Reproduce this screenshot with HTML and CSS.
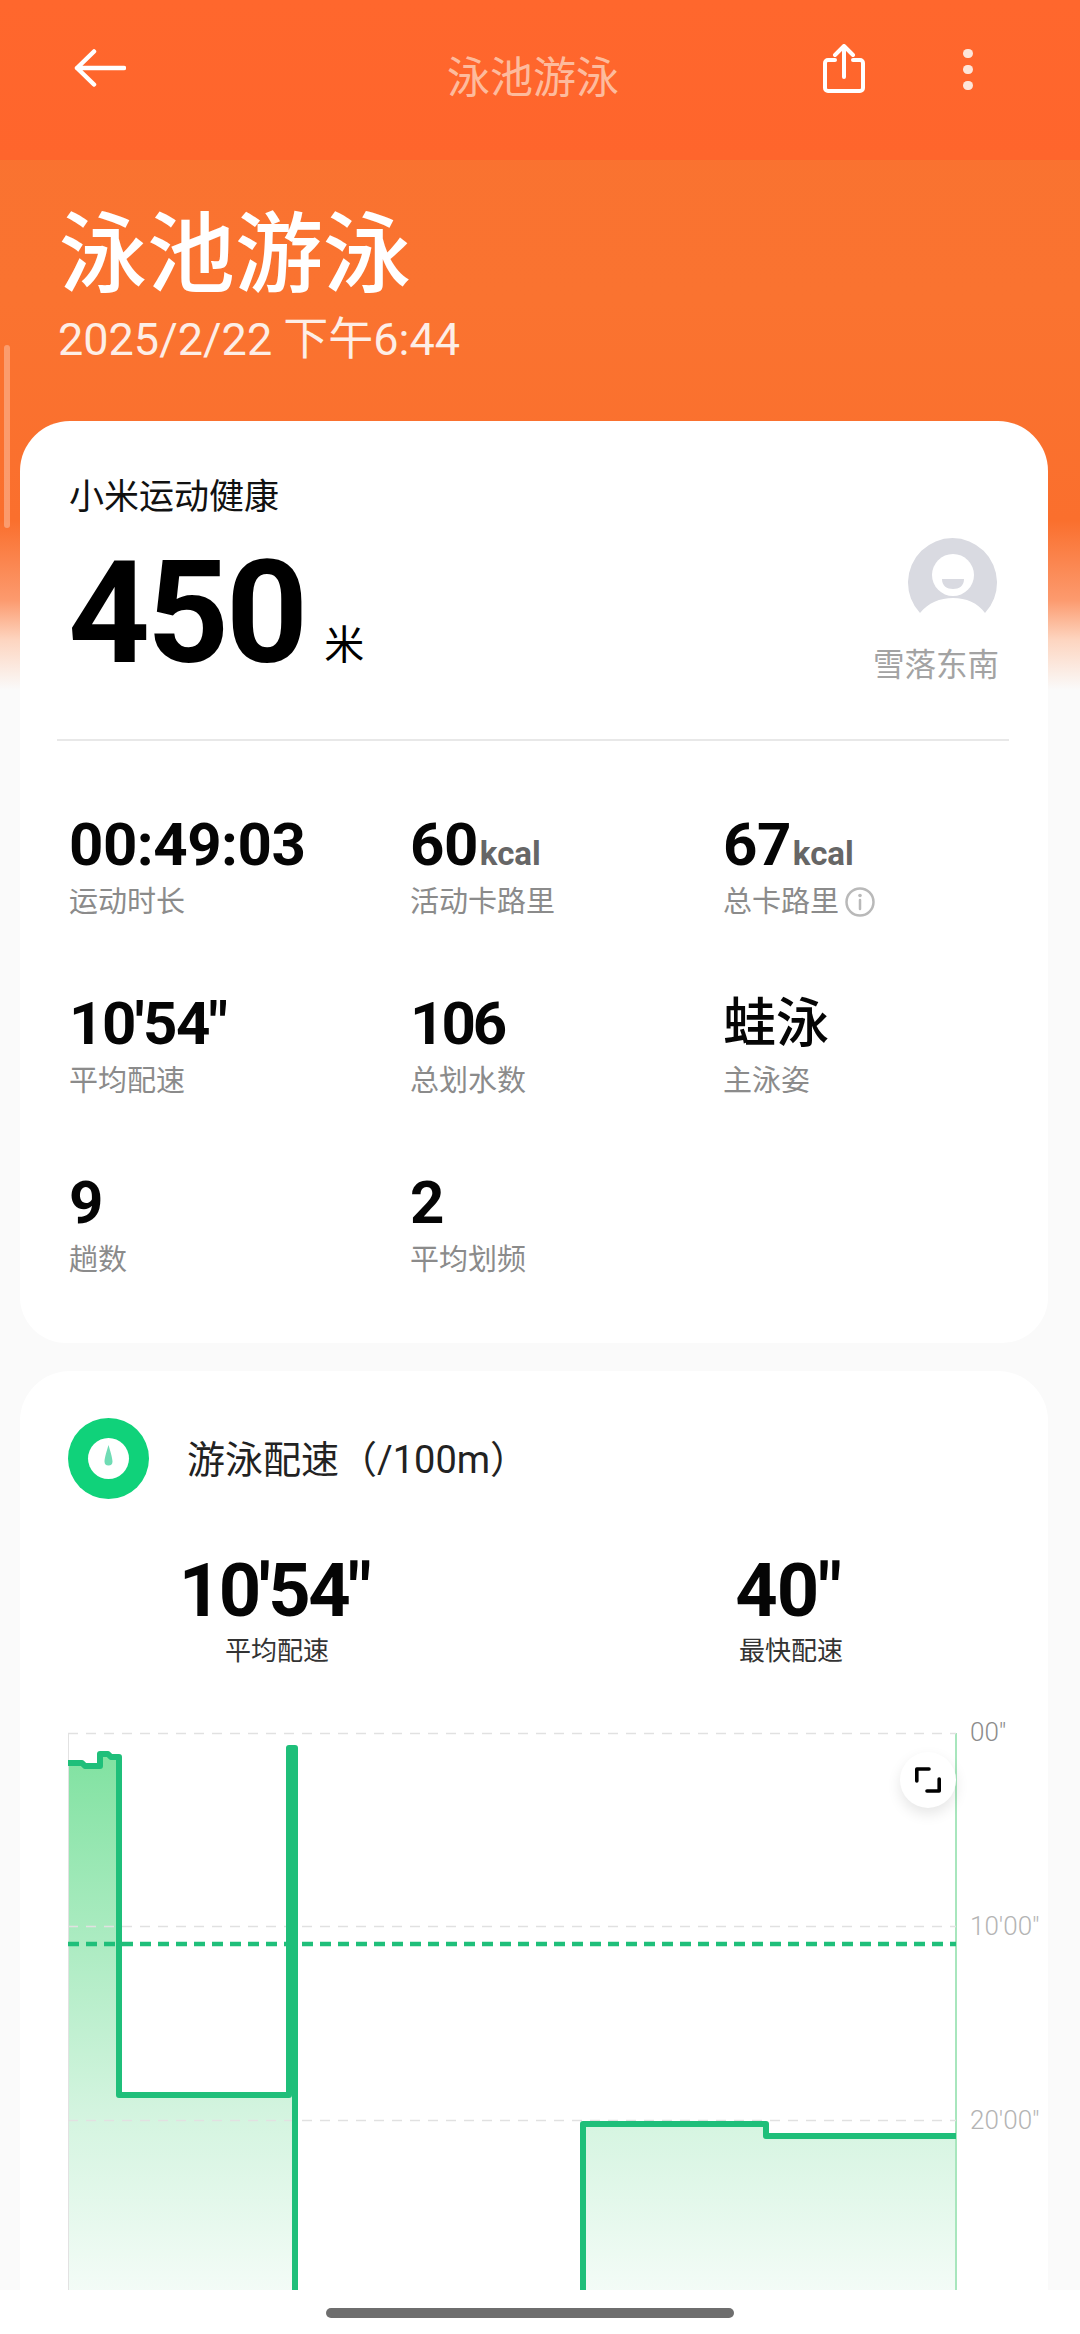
FILE: index.html
```html
<!DOCTYPE html>
<html lang="zh-CN">
<head>
	<meta charset="UTF-8">
	<title>泳池游泳</title>
	<link rel="stylesheet" href="styles.css">
</head>
<body>
	<div class="page">
		<div class="scroll-hint"></div>

		<div class="topbar">
			<svg class="back" viewBox="0 0 52 38">
				<path d="M50 19H3M20 2.500L3 19l17 16.500"/>
			</svg>
			<div class="topbar-title">泳池游泳</div>
			<svg class="share" viewBox="0 0 42 49">
				<path d="M12 16H5a3 3 0 0 0-3 3v25a3 3 0 0 0 3 3h32a3 3 0 0 0 3-3V19a3 3 0 0 0-3-3h-7"/>
				<path d="M21 33V3M12 11l9-9 9 9"/>
			</svg>
			<div class="dots"><i></i><i></i><i></i></div>
		</div>

		<div class="hero">
			<div class="hero-title">泳池游泳</div>
			<div class="hero-date">2025/2/22 下午6:44</div>
		</div>

		<div class="card summary">
			<div class="summary-head">
				<div>
					<div class="source">小米运动健康</div>
					<div class="distance"><b>450</b><span>米</span></div>
				</div>
				<div class="user">
					<svg class="avatar" viewBox="0 0 90 78">
						<path class="avatar-bg" d="M12 76A44.500 44.500 0 1 1 77 76C70 66 58 61 45 61S20 66 12 76Z"/>
						<circle class="avatar-face" cx="45" cy="38" r="21"/>
						<path class="avatar-bg" d="M34 42H56C56 49 51 52 45 52S34 49 34 42Z"/>
					</svg>
					<div class="user-name">雪落东南</div>
				</div>
			</div>
			<div class="stats">
				<div class="stat">
					<div class="stat-value">00:49:03</div>
					<div class="stat-label">运动时长</div>
				</div>
				<div class="stat">
					<div class="stat-value">60<small>kcal</small></div>
					<div class="stat-label">活动卡路里</div>
				</div>
				<div class="stat">
					<div class="stat-value">67<small>kcal</small></div>
					<div class="stat-label">总卡路里
						<svg class="info" viewBox="0 0 30 30">
							<circle cx="15" cy="15" r="13.500"/>
							<path d="M15 13v9"/>
							<circle class="info-dot" cx="15" cy="8.500" r="1.800"/>
						</svg>
					</div>
				</div>
				<div class="stat">
					<div class="stat-value tight">10'54"</div>
					<div class="stat-label">平均配速</div>
				</div>
				<div class="stat">
					<div class="stat-value tighter">106</div>
					<div class="stat-label">总划水数</div>
				</div>
				<div class="stat">
					<div class="stat-value cjk">蛙泳</div>
					<div class="stat-label">主泳姿</div>
				</div>
				<div class="stat">
					<div class="stat-value">9</div>
					<div class="stat-label">趟数</div>
				</div>
				<div class="stat">
					<div class="stat-value">2</div>
					<div class="stat-label">平均划频</div>
				</div>
			</div>
		</div>

		<div class="card pace">
			<div class="pace-head">
				<svg class="pace-icon" viewBox="0 0 81 81">
					<circle class="pace-ring" cx="40.500" cy="40.500" r="40.500"/>
					<circle class="pace-inner" cx="40.500" cy="40.500" r="20.500"/>
					<path class="pace-drop" d="M40.500 27C42 32 44.500 40 44.500 43.500a4 4 0 0 1-8 0C36.500 40 39 32 40.500 27Z"/>
				</svg>
				<div class="pace-title">游泳配速（/100m）</div>
			</div>
			<div class="pace-nums">
				<div class="pace-num">
					<b class="tight">10'54"</b>
					<span>平均配速</span>
				</div>
				<div class="pace-num">
					<b>40"</b>
					<span>最快配速</span>
				</div>
			</div>
			<div class="chart">
				<!-- viewBox uses page coordinates, easier to compare against the screenshot -->
				<svg class="chart-svg" viewBox="20 1700 1028 590">
					<defs>
						<linearGradient id="fade" gradientUnits="userSpaceOnUse" x1="0" y1="1760" x2="0" y2="2300">
							<stop offset="0" stop-color="#82e2a2"/>
							<stop offset="0.65" stop-color="#d3f4df"/>
							<stop offset="1" stop-color="#f5fcf8"/>
						</linearGradient>
					</defs>
					<path class="area" d="M68 1763H82L85 1766H100V1754H108L111 1757H119V2095H292V2290H68Z"/>
					<path class="area" d="M583 2124H766V2136H956V2290H583Z"/>
					<path class="axis-left" d="M68.500 1733V2290"/>
					<path class="axis-right" d="M956 1733V2290"/>
					<path class="grid" d="M68 1733.500H956M68 1926.500H956M68 2120.500H956"/>
					<path class="avg" d="M68 1944H956"/>
					<path class="line" d="M68 1763H82L85 1766H100V1754H108L111 1757H119V2095H289V1748H295V2290"/>
					<path class="line" d="M583 2290V2124H766V2136H956"/>
					<text class="tick tick-first" x="970" y="1741">00"</text>
					<text class="tick" x="970" y="1935">10'00"</text>
					<text class="tick" x="970" y="2129">20'00"</text>
				</svg>
				<div class="expand">
					<svg viewBox="0 0 26 26">
						<path d="M1.800 14V2H14M24.200 12V24H12"/>
					</svg>
				</div>
			</div>
		</div>

		<div class="navbar"><div class="handle"></div></div>
	</div>
</body>
</html>
```

FILE: styles.css
```css
*{
	box-sizing: border-box;
}
html,body{
	margin: 0;
	padding: 0;
}
body{
	font-family: Roboto, "Noto Sans CJK SC", sans-serif;
}
.page{
	position: relative;
	display: flex;flex-direction: column;
	width: 1080px;height: 2334px;overflow: hidden;
	background: linear-gradient(180deg, #f97230 0, #fa7330 300px, #fa6f2d 520px, #fc9a6e 600px, #fdd5c0 640px, #fafafa 690px);
}
.scroll-hint{
	position: absolute;top: 345px;left: 4px;width: 6px;height: 183px;
	border-radius: 3px;background: rgba(255,255,255,.3);
}

.topbar{
	display: flex;align-items: center;flex: none;
	position: relative;
	height: 160px;padding: 0 0 24px 74px;
	background: linear-gradient(180deg, #ff672d, #ff652c);
}
.back{
	width: 52px;height: 38px;
	fill: none;stroke: #fff;stroke-width: 4.500;stroke-linecap: round;stroke-linejoin: round;
}
.topbar-title{
	position: absolute;top: 48px;left: 0;right: 0;padding-right: 14px;
	font-size: 43px;line-height: 60px;text-align: center;color: #fdbb9d;
}
.share{
	width: 42px;height: 49px;margin-left: 697px;
	fill: none;stroke: #fff;stroke-width: 4px;stroke-linecap: round;stroke-linejoin: round;
}
.dots{
	display: flex;flex-direction: column;gap: 6.500px;margin-left: 98px;margin-top: 3px;
}
.dots i{
	width: 9.500px;height: 9.500px;border-radius: 50%;background: #fde6da;
}

.hero{
	flex: none;
	height: 261px;padding: 40px 0 0 58px;color: #fff;
}
.hero-title{
	font-size: 88px;line-height: 110px;font-weight: 500;margin-left: 1px;
}
.hero-date{
	font-size: 45px;line-height: 56px;margin-top: 2px;color: #fdeee6;
}

.card{
	flex: none;
	margin: 0 32px 0 20px;background: #fff;
	border-radius: 50px 50px 46px 46px;
}
.summary{
	height: 922px;padding: 0 39px 0 37px;
}
.summary-head{
	display: flex;justify-content: space-between;
	height: 320px;padding: 52px 10px 0 12px;
	border-bottom: 2px solid #e8e8e8;
}
.source{
	font-size: 35px;line-height: 50px;color: #111;
}
.distance{
	display: flex;align-items: flex-end;margin-top: 20px;margin-left: -1px;color: #000;
}
.distance b{
	font-size: 143px;line-height: 140px;letter-spacing: -3px;
}
.distance span{
	font-size: 40px;line-height: 54px;margin-left: 19px;margin-bottom: 10px;
}
.user{
	display: flex;flex-direction: column;align-items: flex-end;
	padding-top: 64px;
}
.avatar{
	width: 90px;height: 78px;margin-right: 1px;
}
.avatar-bg{
	fill: #d9dae1;
}
.avatar-face{
	fill: #fff;
}
.user-name{
	font-size: 31.500px;line-height: 46px;margin-top: 28px;color: #a3a3a3;
}

.stats{
	display: grid;
	grid-template-columns: 341px 313px 1fr;
	grid-template-rows: 179px 179px auto;
	padding: 69px 0 0 12px;
}
.stat-value{
	height: 70px;
	font-size: 60px;line-height: 70px;font-weight: 700;letter-spacing: -.5px;color: #050505;white-space: nowrap;
}
.stat-value.tight{
	letter-spacing: -1.500px;
}
.stat-value.tighter{
	letter-spacing: -3px;
}
.stat-value small{
	font-size: 33px;font-weight: 700;letter-spacing: 0;color: #666;margin-left: 2px;
}
.stat-value.cjk{
	font-size: 53px;font-weight: 500;letter-spacing: 0;
}
.stat-label{
	display: flex;align-items: center;
	font-size: 29px;line-height: 42px;margin-top: 1px;color: #8b8b8b;
}
.info{
	width: 30px;height: 30px;margin-left: 6px;
	fill: none;stroke: #b9b9b9;stroke-width: 2.500;stroke-linecap: round;
}
.info-dot{
	fill: #b9b9b9;stroke: none;
}

.pace{
	flex: 1;margin-top: 28px;overflow: hidden;
	border-radius: 50px 50px 0 0;
}
.pace-head{
	display: flex;align-items: center;
	padding: 47px 0 0 48px;
}
.pace-icon{
	width: 81px;height: 81px;
}
.pace-ring{
	fill: #10d27a;
}
.pace-inner{
	fill: #fff;
}
.pace-drop{
	fill: #6fdcb4;
}
.pace-title{
	font-size: 38px;line-height: 54px;margin-left: 38px;margin-top: 3px;color: #222;
}
.pace-nums{
	display: grid;grid-template-columns: 1fr 1fr;
	margin-top: 51px;
}
.pace-num{
	display: flex;flex-direction: column;align-items: center;
}
.pace-num b{
	font-size: 74px;line-height: 82px;letter-spacing: -1px;margin-right: 6px;color: #050505;
}
.pace-num b.tight{
	letter-spacing: -2.500px;
}
.pace-num span{
	font-size: 26px;line-height: 38px;color: #333;
}
.chart{
	position: relative;
	flex: 1;height: 590px;margin-top: 30px;
}
.chart-svg{
	display: block;width: 1028px;height: 590px;
}
.area{
	fill: url(#fade);
}
.axis-left{
	stroke: #e2e2e2;stroke-width: 1;fill: none;
}
.axis-right{
	stroke: #a8e6bd;stroke-width: 2;fill: none;
}
.grid{
	stroke: #e1e1e1;stroke-width: 1.500;stroke-dasharray: 10 8;fill: none;
}
.avg{
	stroke: #1fbf7a;stroke-width: 4.500px;stroke-dasharray: 11 7;fill: none;
}
.line{
	stroke: #1fbf7a;stroke-width: 6px;fill: none;stroke-linejoin: round;
}
.tick{
	font-size: 26px;font-weight: 300;fill: #b4b4b4;
}
.tick-first{
	fill: #8c8c8c;
}
.expand{
	position: absolute;top: 52px;left: 880px;
	display: flex;align-items: center;justify-content: center;
	width: 56px;height: 56px;border-radius: 50%;background: #fff;
	box-shadow: 0 6px 14px rgba(0,0,0,.1);
}
.expand svg{
	width: 26px;height: 26px;
	fill: none;stroke: #000;stroke-width: 3.600;stroke-linecap: round;stroke-linejoin: round;
}

.navbar{
	position: absolute;left: 0;right: 0;bottom: 0;
	display: flex;justify-content: center;
	height: 44px;padding: 18px 20px 0 0;background: #fff;
}
.handle{
	width: 408px;height: 10px;border-radius: 5px;background: #6e6e6e;
}
```
